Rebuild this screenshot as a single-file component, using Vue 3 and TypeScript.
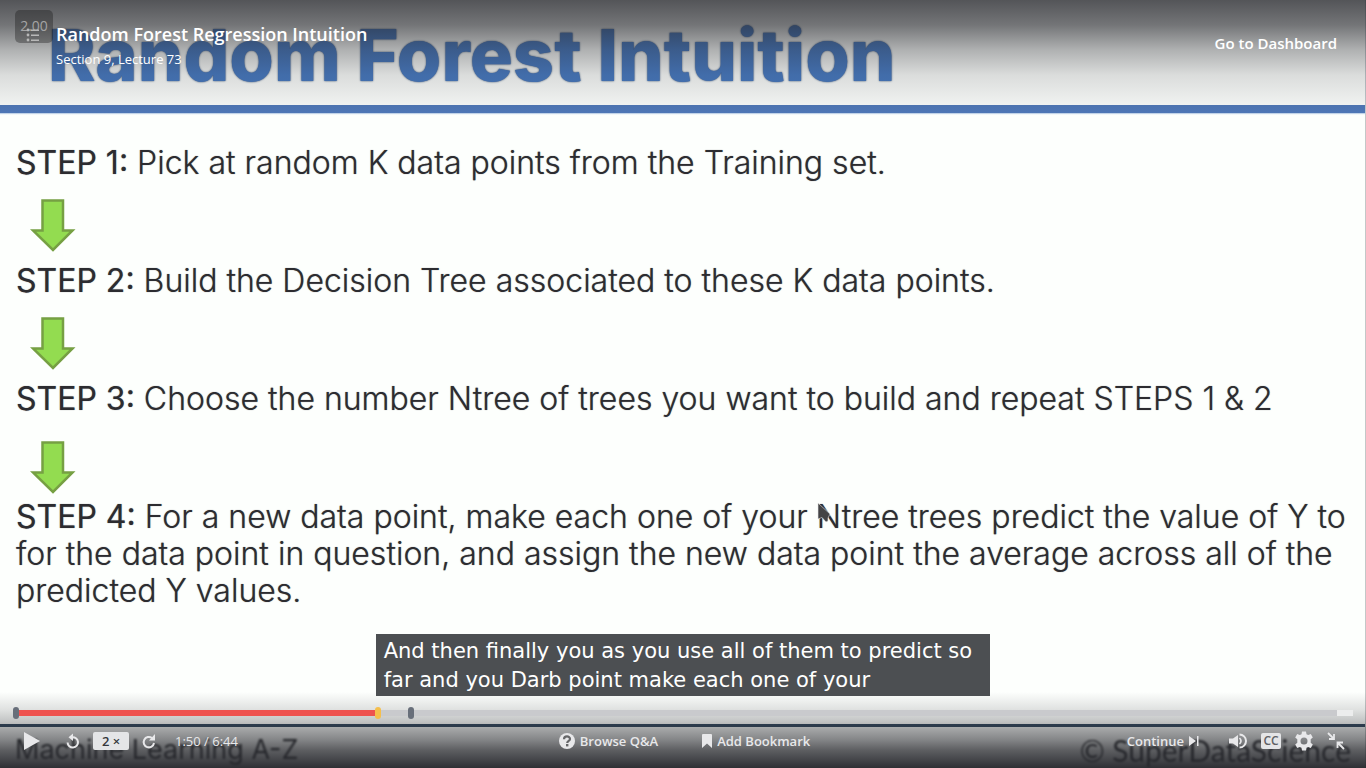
<script setup lang="ts">
import { ref, computed } from 'vue'

interface Step {
  label: string
  lines: string[]
  lowArrow?: boolean
}

const steps: Step[] = [
  { label: 'STEP 1:', lines: ['Pick at random K data points from the Training set.'] },
  { label: 'STEP 2:', lines: ['Build the Decision Tree associated to these K data points.'] },
  {
    label: 'STEP 3:',
    lines: ['Choose the number Ntree of trees you want to build and repeat STEPS 1 & 2'],
    lowArrow: true,
  },
  {
    label: 'STEP 4:',
    lines: [
      'For a new data point, make each one of your Ntree trees predict the value of Y to',
      'for the data point in question, and assign the new data point the average across all of the',
      'predicted Y values.',
    ],
  },
]

const position = ref(27)
const markers = [0, 29.55]
const played = computed(() => ({ '--played': position.value + '%' }))
</script>

<template>
  <main class="player">
    <section class="slide" aria-label="Lecture slide">
      <h1 class="slide-title">Random Forest Intuition</h1>
      <div class="steps">
        <template v-for="(step, i) in steps" :key="step.label">
          <p class="step">
            <span v-for="(line, n) in step.lines" :key="n" class="line"><b v-if="n === 0">{{ step.label }}&nbsp;</b>{{ line }}</span>
          </p>
          <div v-if="i < steps.length - 1" class="arrow-row" :class="{ low: step.lowArrow }">
            <svg width="46" height="54" viewBox="0 0 46 54" aria-hidden="true">
              <path d="M12.500 1.500H33V31.500H42.500L23 51L3 31.500H12.500Z" fill="#93dc50" stroke="#76a043" stroke-width="2.500" />
            </svg>
          </div>
        </template>
      </div>
      <footer class="slide-footer">
        <span>Machine Learning A-Z</span>
        <span class="brand">© SuperDataScience</span>
      </footer>
      <svg class="pointer" width="14" height="24" viewBox="0 0 14 24" aria-hidden="true">
        <path d="M1 1V17L5 15.500L9 20L11 19V16L13 12Z" fill="#444446" stroke="#e8e8e8" stroke-width="0.600" />
      </svg>
    </section>

    <section class="chrome" aria-label="Video player">
      <header class="top">
        <button class="menu" type="button" aria-label="Course contents">
          <span class="rate">2.00</span>
          <svg width="16" height="16" viewBox="0 0 16 16" aria-hidden="true">
            <g fill="#b8b8b8">
              <circle cx="2" cy="3" r="1.400" /><circle cx="2" cy="8" r="1.400" /><circle cx="2" cy="13" r="1.400" />
              <path d="M5 2.500h8v1.500H5zM5 7.500h8v1.500H5zM5 12.500h8v1.500H5z" />
            </g>
          </svg>
        </button>
        <div class="heading">
          <h2>Random Forest Regression Intuition</h2>
          <p>Section 9, Lecture 73</p>
        </div>
        <a class="dashboard" href="#dashboard">Go to Dashboard</a>
      </header>

      <div class="bottom">
        <p class="caption">And then finally you as you use all of them to predict so far and you Darb point make each one of your</p>
        <div class="seek" :style="played">
          <span v-for="m in markers" :key="m" class="marker" :style="{ left: m + '%' }"></span>
          <input v-model.number="position" type="range" min="0" max="100" step="any" aria-label="Seek" />
        </div>
        <div class="controls">
          <div class="group left">
            <button class="play" type="button" aria-label="Play">
              <svg width="16" height="18" viewBox="0 0 16 18"><path d="M0 0L16 9L0 18Z" fill="currentColor" /></svg>
            </button>
            <button class="back" type="button" aria-label="Rewind">
              <svg width="14" height="16" viewBox="0 0 14 16">
                <path d="M6 4.200A5.200 5.200 0 1 1 1.600 9.500" fill="none" stroke="currentColor" stroke-width="2" />
                <path d="M7 0.500V8L2.500 4.200Z" fill="currentColor" />
              </svg>
            </button>
            <button class="speed" type="button">2 ×</button>
            <button class="forward" type="button" aria-label="Forward">
              <svg width="14" height="16" viewBox="0 0 14 16">
                <path d="M10 5A5.200 5.200 0 1 0 12 10" fill="none" stroke="currentColor" stroke-width="2" />
                <path d="M13 1V7.500H7Z" fill="currentColor" />
              </svg>
            </button>
            <span class="time">1:50 / 6:44</span>
          </div>
          <div class="group center">
            <button type="button">
              <svg width="16" height="16" viewBox="0 0 16 16" aria-hidden="true">
                <circle cx="8" cy="8" r="8" fill="currentColor" />
                <path d="M5 6.200C5 2.500 11 2.500 11 6C11 8 8.200 7.800 8.200 10" fill="none" stroke="#666769" stroke-width="2.200" />
                <rect x="7" y="11" width="2.400" height="2.400" fill="#666769" />
              </svg>
              Browse Q&amp;A
            </button>
            <button type="button">
              <svg width="10" height="14" viewBox="0 0 10 14" aria-hidden="true"><path d="M0 1Q0 0 1 0H9Q10 0 10 1V14L5 9.500L0 14Z" fill="currentColor" /></svg>
              Add Bookmark
            </button>
          </div>
          <div class="group right">
            <button class="continue" type="button">
              Continue
              <svg width="10" height="12" viewBox="0 0 10 12" aria-hidden="true"><path d="M0 1L7 6L0 11ZM8 1H9.500V11H8Z" fill="currentColor" /></svg>
            </button>
            <button type="button" aria-label="Volume">
              <svg width="19" height="16" viewBox="0 0 19 16">
                <path d="M0 5.500H4L9 2V14L4 10.500H0Z" fill="currentColor" />
                <path d="M10.500 5Q13.500 8 10.500 11" fill="none" stroke="currentColor" stroke-width="1.600" />
                <path d="M10.500 1.500A6.500 6.500 0 0 1 10.500 14.500" fill="none" stroke="currentColor" stroke-width="2" />
              </svg>
            </button>
            <button type="button" aria-label="Captions" class="cc">CC</button>
            <button type="button" aria-label="Settings">
              <svg width="20" height="20" viewBox="0 0 20 20">
                <path fill="currentColor" fill-rule="evenodd" d="M8 0.500H12L12.500 3.200L14.200 4.100L16.800 3.100L18.800 6.500L16.700 8.300V11.700L18.800 13.500L16.800 16.900L14.200 15.900L12.500 16.800L12 19.500H8L7.500 16.800L5.800 15.900L3.200 16.900L1.200 13.500L3.300 11.700V8.300L1.200 6.500L3.200 3.100L5.800 4.100L7.500 3.200ZM10 6.500A3.500 3.500 0 1 0 10 13.500A3.500 3.500 0 1 0 10 6.500Z" />
              </svg>
            </button>
            <button type="button" aria-label="Exit full screen">
              <svg width="18" height="18" viewBox="0 0 18 18">
                <path d="M1 1L6.500 6.500M7 2V7H2M17 17L11 11M10.500 16V10.500H16" fill="none" stroke="currentColor" stroke-width="1.800" />
              </svg>
            </button>
          </div>
        </div>
      </div>
    </section>
  </main>
</template>

<style>
body {
  margin: 0;
}
</style>

<style scoped>
* {
  box-sizing: border-box;
}
.player {
  display: grid;
  grid-template-columns: minmax(0, 1fr);
  min-height: 100vh;
  overflow: hidden;
  background: #fdfffd;
}
.slide,
.chrome {
  grid-area: 1 / 1;
  display: flex;
  flex-direction: column;
}
.slide {
  position: relative;
  font-family: Inter, "Open Sans", sans-serif;
  color: #2c2c30;
  border-right: 1px solid #c4c8c8;
}
.slide-title {
  margin: 0;
  height: 113px;
  padding: 13px 0 0 48px;
  border-bottom: 8px solid #4f78b8;
  box-shadow: 0 1px 1px #c3d5ea;
  font-size: 72px;
  line-height: 84px;
  font-weight: 800;
  color: #477ac2;
  text-shadow: 0 0 2px #24406c;
  white-space: nowrap;
}
.steps {
  flex: 1;
  padding: 31px 0 0 16px;
  font-size: 32px;
  line-height: 37px;
  font-weight: 300;
}
.step {
  margin: 0;
  text-shadow: 0 0 1px #77777b;
}
.step b {
  font-weight: 400;
}
.line {
  display: block;
  white-space: nowrap;
}
.arrow-row {
  height: 81px;
  padding: 18px 0 0 14px;
}
.arrow-row.low {
  padding-top: 24px;
}
.arrow-row svg {
  display: block;
}
.slide-footer {
  display: flex;
  justify-content: space-between;
  height: 44px;
  padding: 5px 14px 0 15px;
  border-top: 3px solid #30465d;
  font-size: 27px;
  line-height: 36px;
  color: #26282b;
}
.slide-footer span {
  filter: blur(1px);
}
.slide-footer .brand {
  font-family: Lato, sans-serif;
  font-size: 30px;
}
.pointer {
  position: absolute;
  left: 817px;
  top: 502px;
}
.chrome {
  position: relative;
  justify-content: space-between;
  font-family: "Open Sans", sans-serif;
  color: #fff;
}
.top {
  display: flex;
  align-items: flex-start;
  height: 120px;
  padding: 10px 29px 0 15px;
  background: linear-gradient(rgba(38, 39, 44, 0.79) 0, rgba(38, 39, 44, 0.64) 25px, rgba(38, 39, 44, 0.36) 50px, rgba(38, 39, 44, 0.16) 75px, rgba(38, 39, 44, 0.06) 105px, rgba(38, 39, 44, 0) 115px);
}
button {
  display: flex;
  align-items: center;
  gap: 5px;
  padding: 0;
  border: 0;
  background: none;
  font: inherit;
  color: inherit;
}
.menu {
  display: grid;
  justify-items: center;
  width: 38px;
  height: 33px;
  border-radius: 5px;
  background: rgba(20, 20, 20, 0.35);
}
.rate,
.menu svg {
  grid-area: 1 / 1;
}
.rate {
  align-self: start;
  padding-top: 8px;
  font-size: 14px;
  line-height: 16px;
  font-weight: 400;
  color: #a5a5a5;
}
.menu svg {
  align-self: end;
}
.heading {
  flex: 1;
  padding: 12px 0 0 3px;
}
.heading h2 {
  margin: 0;
  font-size: 18px;
  line-height: 24px;
  font-weight: 600;
}
.heading p {
  margin: 4px 0 0;
  font-size: 13px;
  line-height: 18px;
}
.dashboard {
  padding-top: 21px;
  font-size: 15px;
  line-height: 24px;
  font-weight: 600;
  color: #fff;
  text-decoration: none;
}
.bottom {
  display: flex;
  flex-direction: column;
  background: linear-gradient(to top, rgba(38, 39, 44, 0.96) 0, rgba(38, 39, 44, 0.74) 18px, rgba(38, 39, 44, 0.57) 28px, rgba(38, 39, 44, 0.4) 40px, rgba(38, 39, 44, 0.28) 46px, rgba(38, 39, 44, 0.14) 58px, rgba(38, 39, 44, 0) 76px);
}
.caption {
  align-self: center;
  width: 45%;
  margin: 0;
  padding: 3px 8px 1px;
  font-family: "DejaVu Sans", sans-serif;
  font-size: 21px;
  line-height: 29px;
  background: #4c4f52;
}
.seek {
  position: relative;
  height: 12px;
  margin: 11px 13px 0 16px;
}
.seek input {
  appearance: none;
  display: block;
  width: 100%;
  height: 12px;
  margin: 0;
  background: linear-gradient(to right, #ee524f var(--played), #c9cacd var(--played), #c9cacd calc(100% - 16px), #eceded calc(100% - 16px)) center / 100% 6px no-repeat;
}
.seek input::-webkit-slider-thumb {
  appearance: none;
  width: 6px;
  height: 12px;
  border-radius: 3px;
  background: #f5bf4c;
}
.marker {
  position: absolute;
  top: 0;
  width: 6px;
  height: 12px;
  margin-left: -3px;
  border-radius: 3px;
  background: #686f7a;
}
.controls {
  display: grid;
  grid-template-columns: 1fr auto 1fr;
  align-items: center;
  height: 49px;
  padding: 0 21px 6px 24px;
  font-size: 13px;
  line-height: 18px;
  font-weight: 600;
  color: #e8e8ea;
}
.group {
  display: flex;
  align-items: center;
}
.group svg {
  display: block;
}
.back {
  margin-left: 26px;
}
.speed {
  justify-content: center;
  width: 36px;
  height: 18px;
  margin: 0 13px;
  border-radius: 2px;
  background: #e4e5e7;
  color: #33363b;
  white-space: pre;
}
.time {
  margin-left: 19px;
  font-weight: 500;
}
.center {
  gap: 44px;
}
.right {
  justify-content: flex-end;
  gap: 13px;
}
.continue {
  margin-right: 17px;
}
.cc {
  justify-content: center;
  width: 20px;
  height: 16px;
  border-radius: 2px;
  background: #e4e5e7;
  color: #606165;
  font-size: 12px;
  line-height: 16px;
  font-weight: 600;
}
</style>
